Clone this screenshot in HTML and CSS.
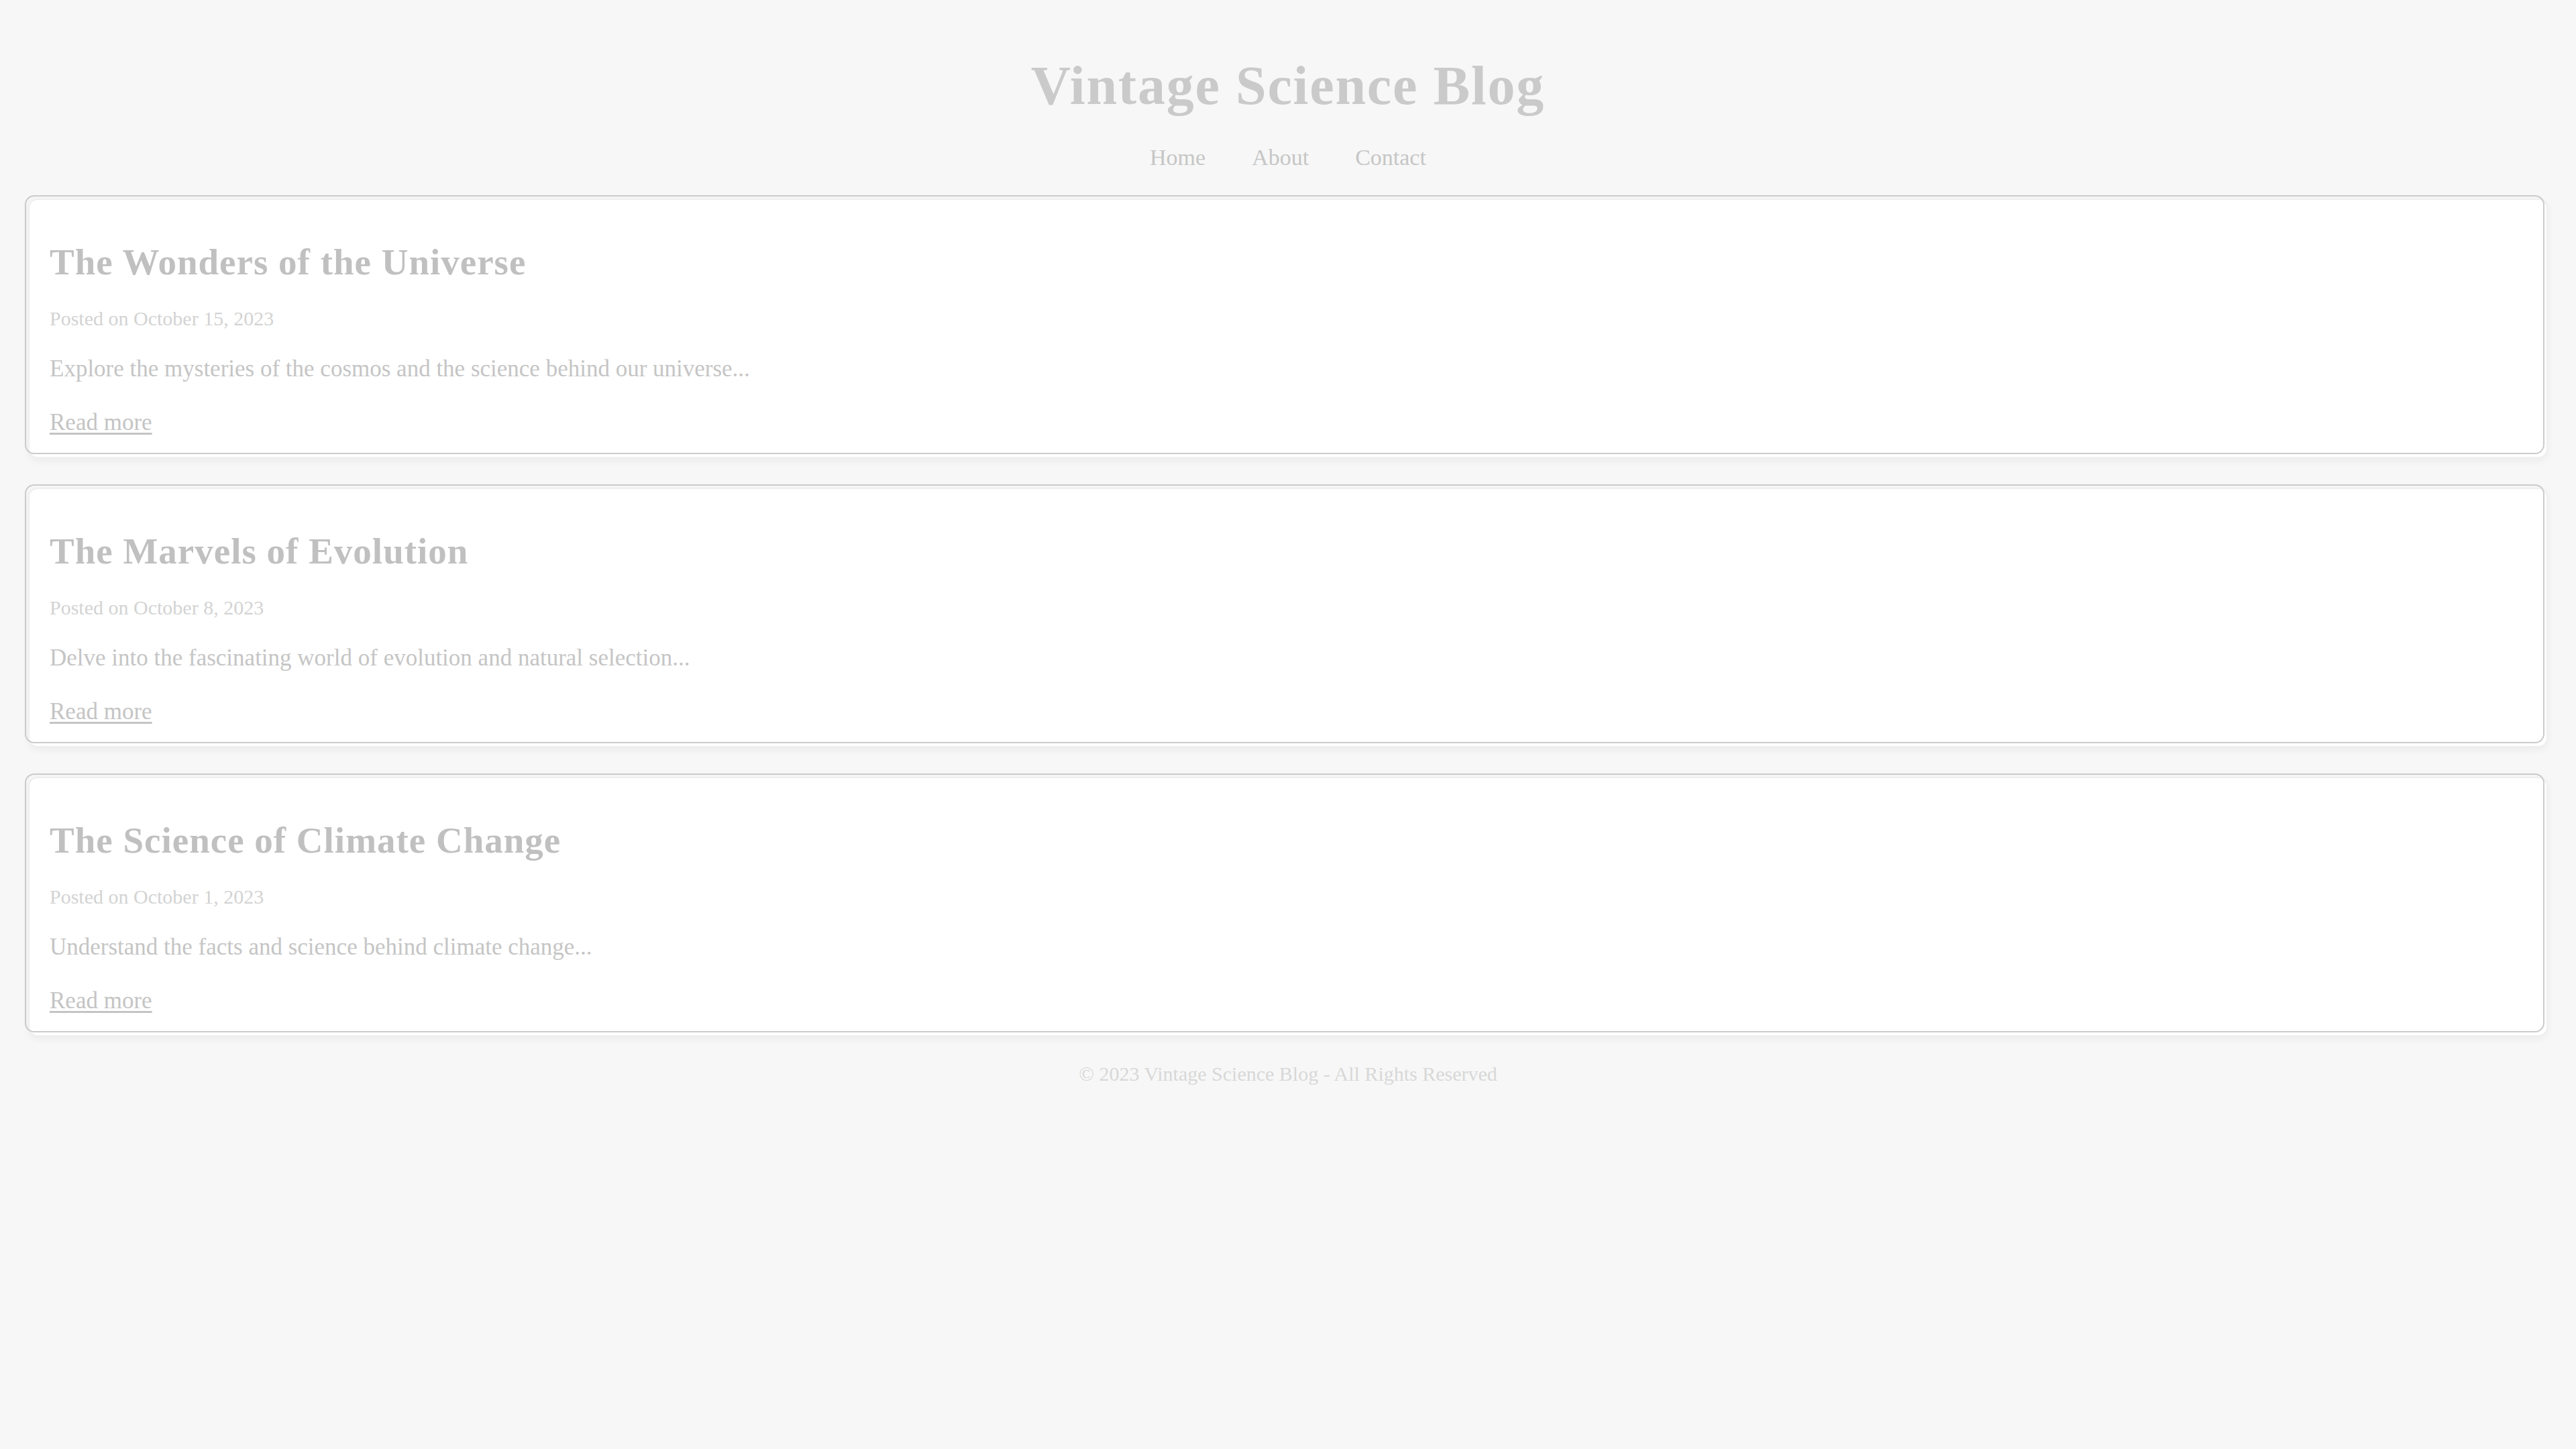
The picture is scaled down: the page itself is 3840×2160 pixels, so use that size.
FILE: index.html
```html
<!DOCTYPE html>
<html lang="en">
<head>
<meta charset="utf-8">
<title>Vintage Science Blog</title>
<link rel="stylesheet" href="styles.css">
</head>
<body>
<header class="site-header">
  <h1 class="site-title">Vintage Science Blog</h1>
  <nav class="site-nav">
    <a href="#" class="nav-link">Home</a>
    <a href="#" class="nav-link">About</a>
    <a href="#" class="nav-link">Contact</a>
  </nav>
</header>
<main class="posts">
  <article class="post">
    <h2 class="post-title">The Wonders of the Universe</h2>
    <p class="post-date">Posted on October 15, 2023</p>
    <p class="post-excerpt">Explore the mysteries of the cosmos and the science behind our universe...</p>
    <a href="#" class="read-more">Read more</a>
  </article>
  <article class="post">
    <h2 class="post-title">The Marvels of Evolution</h2>
    <p class="post-date">Posted on October 8, 2023</p>
    <p class="post-excerpt">Delve into the fascinating world of evolution and natural selection...</p>
    <a href="#" class="read-more">Read more</a>
  </article>
  <article class="post">
    <h2 class="post-title">The Science of Climate Change</h2>
    <p class="post-date">Posted on October 1, 2023</p>
    <p class="post-excerpt">Understand the facts and science behind climate change...</p>
    <a href="#" class="read-more">Read more</a>
  </article>
</main>
<footer class="site-footer">
  <p class="footer-text">&copy; 2023 Vintage Science Blog - All Rights Reserved</p>
</footer>
</body>
</html>
```

FILE: styles.css
```css
html {
  background: #f7f7f7;
}

body {
  margin: 0;
  background: #f7f7f7;
  font-family: "Liberation Serif", "Times New Roman", serif;
  color: #c4c4c4;
}

.site-header {
  padding-top: 78px;
  text-align: center;
}

.site-title {
  margin: 0;
  font-size: 82px;
  line-height: 100px;
  font-weight: bold;
  letter-spacing: 1.8px;
  color: #cacaca;
}

.site-nav {
  margin-top: 37px;
  display: flex;
  justify-content: center;
  gap: 69px;
  font-size: 34px;
  line-height: 40px;
}

.nav-link {
  color: #c6c6c6;
  text-decoration: none;
}

.posts {
  padding: 41px 42px 0;
  display: flex;
  flex-direction: column;
  gap: 44px;
}

.post {
  position: relative;
  background: #ffffff;
  border: 2px solid #efefef;
  border-radius: 14px;
  box-shadow: 0 4px 12px rgba(0, 0, 0, 0.05);
  padding: 0 30px 30px;
}

.post::before {
  content: "";
  position: absolute;
  top: -7px;
  left: -7px;
  right: 3px;
  bottom: 4px;
  border: 2px solid #cbcbcb;
  border-radius: 14px;
  pointer-events: none;
}

.post-title {
  margin: 63px 0 0;
  font-size: 55px;
  line-height: 60px;
  font-weight: bold;
  letter-spacing: 1px;
  color: #c0c0c0;
}

.post-date {
  margin: 36px 0 0;
  font-size: 30px;
  line-height: 36px;
  color: #d3d3d3;
}

.post-excerpt {
  margin: 36px 0 0;
  font-size: 35px;
  line-height: 42px;
  color: #c5c5c5;
}

.read-more {
  display: inline-block;
  margin-top: 38px;
  font-size: 35px;
  line-height: 42px;
  color: #c4c4c4;
  text-decoration: underline;
  text-decoration-thickness: 3px;
  text-underline-offset: 4px;
}

.site-footer {
  padding-top: 38px;
  text-align: center;
}

.footer-text {
  margin: 0;
  font-size: 30px;
  line-height: 36px;
  color: #d8d8d8;
}
```
